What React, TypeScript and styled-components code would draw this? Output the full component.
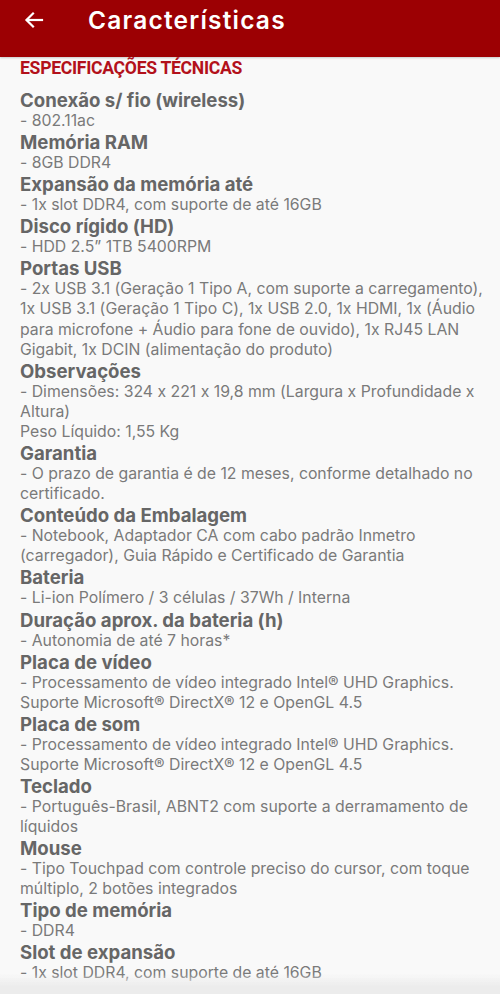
import React from "react";
import styled, { createGlobalStyle } from "styled-components";

const Global = createGlobalStyle`
  html, body { margin: 0; padding: 0; background: #f9f9f9; }
  body { font-family: Inter, "Open Sans", sans-serif; font-feature-settings: "calt" 0; }
`;

const Page = styled.div`
  width: 500px;
  min-height: 994px;
  background: #f9f9f9;
  overflow: hidden;
`;

const TopBar = styled.header`
  height: 57px;
  background: #9c0003;
  display: flex;
  align-items: center;
  padding-left: 22px;
  padding-bottom: 18px;
  box-sizing: border-box;
  box-shadow: 0 1px 2px rgba(0,0,0,0.2);
`;

const BackIcon = styled.svg`
  width: 24px;
  height: 24px;
  flex: none;
`;

const Title = styled.h1`
  margin: 0 0 0 42px;
  color: #fff;
  font-family: Inter, sans-serif;
  font-weight: 600;
  font-size: 24.5px;
  letter-spacing: 1.2px;
`;

const Content = styled.main`
  padding: 0 20px 0 20px;
`;

const SectionHeading = styled.h2`
  margin: 0;
  padding-top: 1px;
  color: #b3111b;
  font-family: Roboto, sans-serif;
  font-weight: 700;
  font-size: 17.6px;
  line-height: 20px;
  letter-spacing: -0.3px;
  margin-bottom: 11px;
`;

const Spec = styled.section`
  display: flex;
  flex-direction: column;
`;

const SpecName = styled.div`
  color: #666;
  font-weight: 700;
  font-size: 18.6px;
  line-height: 22px;
`;

const SpecValue = styled.div`
  color: #7a7a7a;
  font-weight: 400;
  font-size: 15.8px;
  line-height: 20.1px;
  white-space: nowrap;
`;

const BottomFade = styled.div`
  position: fixed;
  left: 0;
  right: 0;
  bottom: 0;
  height: 20px;
  background: linear-gradient(to bottom, rgba(236,236,236,0), #ececec 60%);
  pointer-events: none;
`;

const specs: { name: string; value: string[] }[] = [
  { name: "Conexão s/ fio (wireless)", value: ["- 802.11ac"] },
  { name: "Memória RAM", value: ["- 8GB DDR4"] },
  { name: "Expansão da memória até", value: ["- 1x slot DDR4, com suporte de até 16GB"] },
  { name: "Disco rígido (HD)", value: ["- HDD 2.5\u201d 1TB 5400RPM"] },
  {
    name: "Portas USB",
    value: [
      "- 2x USB 3.1 (Geração 1 Tipo A, com suporte a carregamento),",
      "1x USB 3.1 (Geração 1 Tipo C), 1x USB 2.0, 1x HDMI, 1x (Áudio",
      "para microfone + Áudio para fone de ouvido), 1x RJ45 LAN",
      "Gigabit, 1x DCIN (alimentação do produto)",
    ],
  },
  {
    name: "Observações",
    value: ["- Dimensões: 324 x 221 x 19,8 mm (Largura x Profundidade x", "Altura)", "Peso Líquido: 1,55 Kg"],
  },
  { name: "Garantia", value: ["- O prazo de garantia é de 12 meses, conforme detalhado no", "certificado."] },
  {
    name: "Conteúdo da Embalagem",
    value: ["- Notebook, Adaptador CA com cabo padrão Inmetro", "(carregador), Guia Rápido e Certificado de Garantia"],
  },
  { name: "Bateria", value: ["- Li-ion Polímero / 3 células / 37Wh / Interna"] },
  { name: "Duração aprox. da bateria (h)", value: ["- Autonomia de até 7 horas*"] },
  {
    name: "Placa de vídeo",
    value: ["- Processamento de vídeo integrado Intel® UHD Graphics.", "Suporte Microsoft® DirectX® 12 e OpenGL 4.5"],
  },
  {
    name: "Placa de som",
    value: ["- Processamento de vídeo integrado Intel® UHD Graphics.", "Suporte Microsoft® DirectX® 12 e OpenGL 4.5"],
  },
  { name: "Teclado", value: ["- Português-Brasil, ABNT2 com suporte a derramamento de", "líquidos"] },
  {
    name: "Mouse",
    value: ["- Tipo Touchpad com controle preciso do cursor, com toque", "múltiplo, 2 botões integrados"],
  },
  { name: "Tipo de memória", value: ["- DDR4"] },
  { name: "Slot de expansão", value: ["- 1x slot DDR4, com suporte de até 16GB"] },
];

export default function App() {
  return (
    <Page>
      <Global />
      <TopBar>
        <BackIcon viewBox="0 0 24 24" fill="none" stroke="#fff" strokeWidth="2.2" strokeLinecap="square">
          <path d="M20 12H5" />
          <path d="M11 5.5L4.5 12L11 18.5" />
        </BackIcon>
        <Title>Características</Title>
      </TopBar>
      <Content>
        <SectionHeading>ESPECIFICAÇÕES TÉCNICAS</SectionHeading>
        {specs.map((s) => (
          <Spec key={s.name}>
            <SpecName>{s.name}</SpecName>
            {s.value.map((v, i) => (
              <SpecValue key={i}>{v}</SpecValue>
            ))}
          </Spec>
        ))}
      </Content>
      <BottomFade />
    </Page>
  );
}
